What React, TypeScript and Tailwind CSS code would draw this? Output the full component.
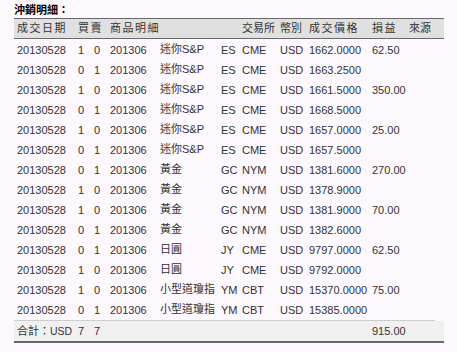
import React from "react";

type Row = [string, string, string, string, string, string, string, string, string, string, string];

const rows: Row[] = [
  ["20130528", "1", "0", "201306", "迷你S&P", "ES", "CME", "USD", "1662.0000", "62.50", ""],
  ["20130528", "0", "1", "201306", "迷你S&P", "ES", "CME", "USD", "1663.2500", "", ""],
  ["20130528", "1", "0", "201306", "迷你S&P", "ES", "CME", "USD", "1661.5000", "350.00", ""],
  ["20130528", "0", "1", "201306", "迷你S&P", "ES", "CME", "USD", "1668.5000", "", ""],
  ["20130528", "1", "0", "201306", "迷你S&P", "ES", "CME", "USD", "1657.0000", "25.00", ""],
  ["20130528", "0", "1", "201306", "迷你S&P", "ES", "CME", "USD", "1657.5000", "", ""],
  ["20130528", "0", "1", "201306", "黃金", "GC", "NYM", "USD", "1381.6000", "270.00", ""],
  ["20130528", "1", "0", "201306", "黃金", "GC", "NYM", "USD", "1378.9000", "", ""],
  ["20130528", "1", "0", "201306", "黃金", "GC", "NYM", "USD", "1381.9000", "70.00", ""],
  ["20130528", "0", "1", "201306", "黃金", "GC", "NYM", "USD", "1382.6000", "", ""],
  ["20130528", "0", "1", "201306", "日圓", "JY", "CME", "USD", "9797.0000", "62.50", ""],
  ["20130528", "1", "0", "201306", "日圓", "JY", "CME", "USD", "9792.0000", "", ""],
  ["20130528", "1", "0", "201306", "小型道瓊指", "YM", "CBT", "USD", "15370.0000", "75.00", ""],
  ["20130528", "0", "1", "201306", "小型道瓊指", "YM", "CBT", "USD", "15385.0000", "", ""],
];

const grid = "grid grid-cols-[61px_16px_16px_50px_61px_21px_38px_29px_63px_37px_38px] whitespace-nowrap leading-none";

export default function App() {
  return (
    <div
      className="w-[457px] h-[352px] bg-[#fdf8fd] text-[11px] text-[#333333] overflow-hidden"
      style={{ fontFamily: "'Liberation Sans', 'Noto Sans CJK TC', sans-serif" }}
    >
      <div className="pl-[14px] h-[18px] leading-[20px] text-[11px] font-semibold text-black">沖銷明細：</div>
      <div className="ml-[14px] w-[430px]">
        <div className={`${grid} h-[21px] items-center bg-[#e0e0e0] border-t border-b border-[#6a6a6a]`}>
          <div className="pl-[3px] tracking-[1.5px]">成交日期</div>
          <div className="pl-[3px] tracking-[1.5px]">買賣</div>
          <div></div>
          <div className="pl-[3px] tracking-[1.5px]">商品明細</div>
          <div></div>
          <div></div>
          <div className="pl-[3px]">交易所</div>
          <div className="pl-[3px]">幣別</div>
          <div className="pl-[3px] tracking-[1.5px]">成交價格</div>
          <div className="pl-[3px] tracking-[1.5px]">損益</div>
          <div className="pl-[3px]">來源</div>
        </div>
        <div className="pt-[1px] w-[421px] border-b border-[#cccccc]">
          {rows.map((r, i) => (
            <div key={i} className={`${grid} h-[20px] items-center`}>
              {r.map((c, j) => (
                <div key={j} className={`pl-[3px] ${j === 4 ? "-mt-[2px]" : ""}`}>
                  {c}
                </div>
              ))}
            </div>
          ))}
        </div>
        <div className={`${grid} h-[22px] items-center bg-[#f0f0f0] border-b-2 border-[#6a6a6a]`}>
          <div className="pl-[3px]">
            合計：<span className="text-[10.5px]">USD</span>
          </div>
          <div className="pl-[3px]">7</div>
          <div className="pl-[3px]">7</div>
          <div></div>
          <div></div>
          <div></div>
          <div></div>
          <div></div>
          <div></div>
          <div className="pl-[3px]">915.00</div>
          <div></div>
        </div>
      </div>
    </div>
  );
}
